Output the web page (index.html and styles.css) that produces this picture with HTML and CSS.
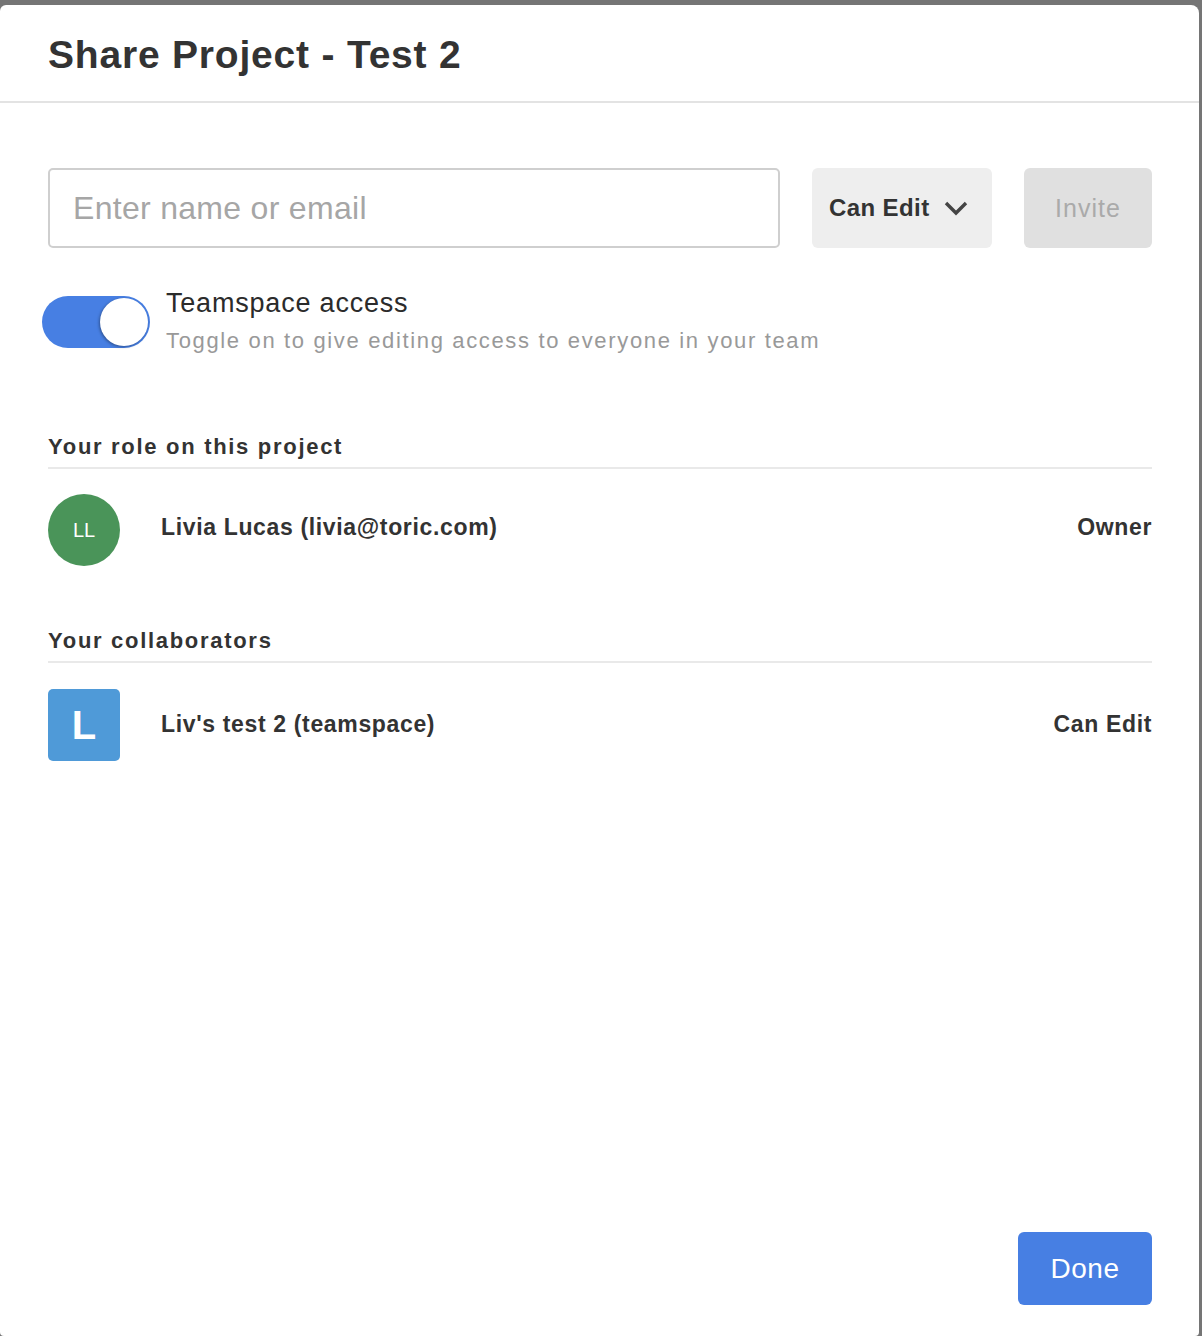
FILE: index.html
```html
<!doctype html>
<html lang="en">
	<head>
		<meta name="viewport" content="width=device-width,initial-scale=1" />
		<title>Share Project - Test 2</title>
		<link rel="stylesheet" href="styles.css">
	</head>
	<body>
		<div class="dialog">
			<header class="dialog-header">
				<h1>Share Project - Test 2</h1>
			</header>

			<div class="dialog-body">
				<div class="invite-row">
					<input type="text" class="invite-input" placeholder="Enter name or email" />
					<button class="role-select">
						Can Edit
						<svg width="24" height="16" viewBox="0 0 24 16" aria-hidden="true">
							<path d="M2 3l10 10 10-10" fill="none" stroke="#444" stroke-width="3.4" />
						</svg>
					</button>
					<button class="invite-btn" disabled>Invite</button>
				</div>

				<div class="teamspace">
					<span class="toggle"><span class="toggle-knob"></span></span>
					<div class="teamspace-text">
						<div class="teamspace-title">Teamspace access</div>
						<div class="teamspace-hint">Toggle on to give editing access to everyone in your team</div>
					</div>
				</div>

				<section class="people people-role">
					<h2>Your role on this project</h2>
					<div class="person">
						<span class="avatar avatar-round">LL</span>
						<span class="person-name">Livia Lucas (livia@toric.com)</span>
						<span class="person-role">Owner</span>
					</div>
				</section>

				<section class="people people-collab">
					<h2>Your collaborators</h2>
					<div class="person">
						<span class="avatar avatar-team">L</span>
						<span class="person-name">Liv's test 2 (teamspace)</span>
						<span class="person-role">Can Edit</span>
					</div>
				</section>
			</div>

			<footer class="dialog-footer">
				<button class="done-btn">Done</button>
			</footer>
		</div>
	</body>
</html>
```

FILE: styles.css
```css
html,
body {
	margin: 0;
}

body {
	box-sizing: border-box;
	height: 1336px;
	padding: 5px 3px 0 0;
	background: #757575;
	font-family: "Liberation Sans", Arial, sans-serif;
	color: #333;
}

.dialog {
	box-sizing: border-box;
	display: flex;
	flex-direction: column;
	height: 100%;
	background: #fff;
	border-radius: 6px 8px 4px 4px;
}

.dialog-header {
	display: flex;
	align-items: center;
	height: 96px;
	padding: 0 48px;
	border-bottom: 2px solid #e3e3e3;

	& h1 {
		margin: 4px 0 0;
		font-size: 39px;
		font-weight: 700;
		letter-spacing: 0.8px;
		color: #333;
	}
}

.dialog-body {
	flex: 1;
	padding: 65px 47px 0 48px;
}

.invite-row {
	display: flex;
	gap: 32px;
	height: 80px;
}

.invite-input {
	box-sizing: border-box;
	flex: 1;
	height: 80px;
	padding: 0 23px;
	border: 2px solid #cfcfcf;
	border-radius: 5px;
	font: 32px "Liberation Sans", Arial, sans-serif;
	letter-spacing: 0.3px;
	color: #333;

	&::placeholder {
		color: #a6a6a6;
	}
}

.role-select,
.invite-btn {
	display: flex;
	align-items: center;
	height: 80px;
	border: 0;
	border-radius: 6px;
	font-family: "Liberation Sans", Arial, sans-serif;
	font-size: 24px;
}

.role-select {
	gap: 14px;
	width: 180px;
	padding: 0 0 0 17px;
	background: #eee;
	font-weight: 700;
	letter-spacing: 0.4px;
	color: #333;
}

.invite-btn {
	justify-content: center;
	width: 128px;
	background: #e0e0e0;
	font-size: 25px;
	letter-spacing: 1px;
	color: #aaa;
}

.teamspace {
	display: flex;
	align-items: flex-start;
	gap: 16px;
	margin: 38px 0 0 -6px;
}

.toggle {
	box-sizing: border-box;
	display: flex;
	justify-content: flex-end;
	align-items: center;
	width: 108px;
	height: 52px;
	margin-top: 10px;
	padding: 2px;
	border-radius: 26px;
	background: #477fe3;
}

.toggle-knob {
	width: 48px;
	height: 48px;
	border-radius: 50%;
	background: #fff;
	box-shadow: -1px 1px 3px rgba(0, 0, 0, 0.35);
}

.teamspace-title {
	font-size: 27px;
	letter-spacing: 0.8px;
	line-height: 34px;
	color: #2b2b2b;
}

.teamspace-hint {
	margin-top: 7px;
	font-size: 22px;
	letter-spacing: 1.65px;
	line-height: 28px;
	color: #999;
}

.people {
	margin-top: 37px;

	& h2 {
		margin: 0;
		padding-bottom: 5px;
		border-bottom: 2px solid #e9e9e9;
		font-size: 22px;
		font-weight: 700;
		letter-spacing: 1.7px;
		line-height: 30px;
		color: #333;
	}
}

.people-role {
	margin-top: 77px;
}

.person {
	display: flex;
	align-items: center;
	gap: 41px;
	padding: 25px 0 23px;
	font-size: 23px;
	font-weight: 700;
	letter-spacing: 0.65px;
}

.person-name {
	flex: 1;
	margin-bottom: 6px;
}

.person-role {
	margin-bottom: 6px;
}

.people-collab .person {
	padding-top: 26px;

	& .person-name,
	& .person-role {
		margin-bottom: 2px;
	}
}

.avatar {
	display: flex;
	justify-content: center;
	align-items: center;
	width: 72px;
	height: 72px;
	color: #fff;
	letter-spacing: 0;
}

.avatar-round {
	border-radius: 50%;
	background: #4a9459;
	font-size: 20px;
	font-weight: 400;
}

.avatar-team {
	border-radius: 5px;
	background: #4f9ad8;
	font-size: 40px;
	font-weight: 700;
}

.dialog-footer {
	display: flex;
	justify-content: flex-end;
	padding: 0 47px 31px 0;
}

.done-btn {
	width: 134px;
	height: 73px;
	border: 0;
	border-radius: 6px;
	background: #477fe3;
	font: 28px "Liberation Sans", Arial, sans-serif;
	letter-spacing: 0.5px;
	color: #fff;
}
```
